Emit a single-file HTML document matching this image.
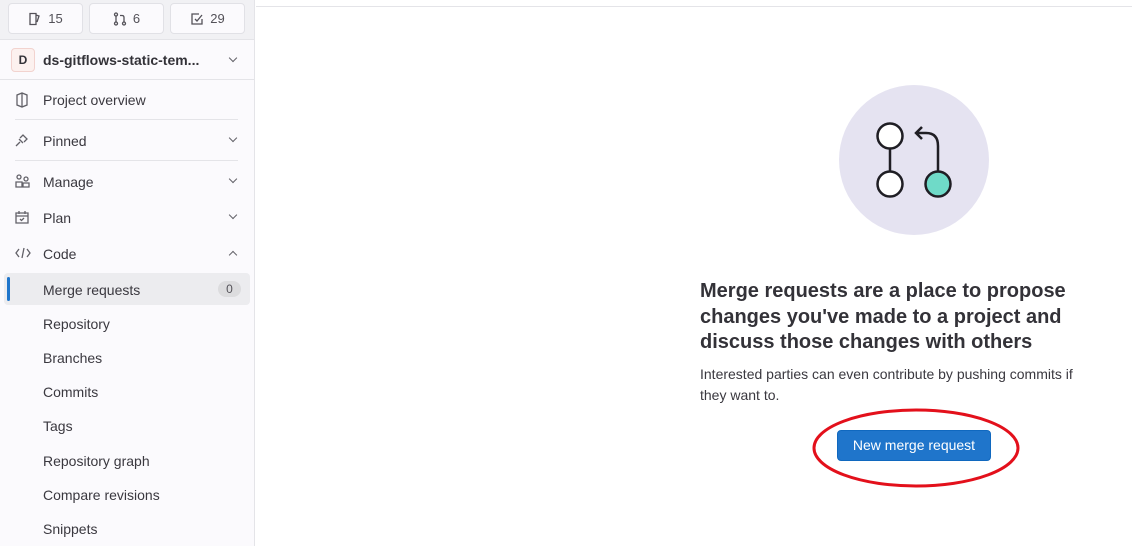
<!DOCTYPE html>
<html><head><style>
*{margin:0;padding:0;box-sizing:border-box}
body{width:1132px;height:546px;overflow:hidden;font-family:"Liberation Sans",sans-serif;background:#fff;color:#333238;position:relative}
.sb{position:absolute;left:0;top:0;width:255px;height:546px;background:#fbfafd;border-right:1px solid #e4e4e8}
.top{height:40px;background:#f1f1f4;border-bottom:1px solid #e4e4e8;position:relative}
.cnt{position:absolute;top:3px;height:31px;background:#fbfafd;border:1px solid #e1e1e6;border-radius:4px;font-size:13px;color:#535158;display:flex;align-items:center;justify-content:center;gap:6px}
.av{position:absolute;left:11px;top:48px;width:24px;height:24px;border:1px solid #f2d3cf;background:#fcf1ef;border-radius:4px;font-size:12px;font-weight:bold;text-align:center;line-height:22px}
.it{position:absolute;left:43px;font-size:14px;color:#3a383f}
.ic{position:absolute;left:15px}
.chev{position:absolute;left:230px;width:6px;height:6px;border-right:1.3px solid #626168;border-bottom:1.3px solid #626168;transform:rotate(45deg)}
.hr{position:absolute;left:15px;width:223px;height:1px;background:#e4e4e8}
</style></head><body>
<div class="sb">
<div class="top">
<div class="cnt" style="left:8px;width:75px"><svg width="14" height="14" viewBox="0 0 14 14" fill="none" stroke="#535158" stroke-width="1.3"><path d="M2 1.5h6v11H2zM8 3l3 1-2 6"/></svg>15</div>
<div class="cnt" style="left:89px;width:75px"><svg width="14" height="14" viewBox="0 0 14 14" fill="none" stroke="#535158" stroke-width="1.3"><circle cx="3" cy="2.5" r="1.5"/><circle cx="3" cy="11.5" r="1.5"/><circle cx="11" cy="11.5" r="1.5"/><path d="M3 4v6M11 10V5.5Q11 3.5 9 3.5H7"/></svg>6</div>
<div class="cnt" style="left:170px;width:75px"><svg width="14" height="14" viewBox="0 0 14 14" fill="none" stroke="#535158" stroke-width="1.3"><path d="M12 7v5H2V2h7M5 7l2 2 5-6"/></svg>29</div>
</div>
<div class="av">D</div>
<div class="it" style="top:52px;font-weight:bold;color:#333238">ds-gitflows-static-tem...</div>
<div class="chev" style="top:55px"></div>
<div style="position:absolute;left:0;top:79px;width:254px;height:1px;background:#e4e4e8"></div>
<svg class="ic" style="top:92px" width="14" height="16" viewBox="0 0 14 16" fill="none" stroke="#626168" stroke-width="1.3"><path d="M2 3l5-2 5 2v10l-5 2-5-2zM7 1v14"/></svg>
<div class="it" style="top:92px">Project overview</div>
<div class="hr" style="top:119px"></div>
<svg class="ic" style="top:133px" width="14" height="14" viewBox="0 0 14 14" fill="none" stroke="#626168" stroke-width="1.3"><path d="M1 13l4-4M4 6l4 4M5 5l3-3 4 4-3 3"/></svg>
<div class="it" style="top:133px">Pinned</div><div class="chev" style="top:135px"></div>
<div class="hr" style="top:160px"></div>
<svg class="ic" style="top:174px" width="16" height="14" viewBox="0 0 16 14" fill="none" stroke="#626168" stroke-width="1.3"><circle cx="4" cy="3" r="2"/><circle cx="11" cy="5" r="2"/><path d="M1 13V8h6v5zM8 13V9h6v4z"/></svg>
<div class="it" style="top:174px">Manage</div><div class="chev" style="top:176px"></div>
<svg class="ic" style="top:210px" width="14" height="14" viewBox="0 0 14 14" fill="none" stroke="#626168" stroke-width="1.3"><path d="M1 3h12v10H1zM1 6h12M4 1v3M10 1v3M5 9l1.5 1.5L9 8"/></svg>
<div class="it" style="top:210px">Plan</div><div class="chev" style="top:212px"></div>
<svg class="ic" style="top:247px" width="16" height="12" viewBox="0 0 16 12" fill="none" stroke="#626168" stroke-width="1.3"><path d="M4 2L1 6l3 4M12 2l3 4-3 4M9 1L7 11"/></svg>
<div class="it" style="top:246px">Code</div><div class="chev" style="top:252px;transform:rotate(225deg)"></div>
<div style="position:absolute;left:4px;top:273px;width:246px;height:32px;background:#ececef;border-radius:4px"></div>
<div style="position:absolute;left:7px;top:277px;width:3px;height:24px;background:#1f75cb;border-radius:2px"></div>
<div class="it" style="top:282px">Merge requests</div>
<div style="position:absolute;left:218px;top:281px;width:23px;height:16px;border-radius:8px;background:#dcdcde;font-size:12px;text-align:center;line-height:16px;color:#535158">0</div>
<div class="it" style="top:316px">Repository</div>
<div class="it" style="top:350px">Branches</div>
<div class="it" style="top:384px">Commits</div>
<div class="it" style="top:418px">Tags</div>
<div class="it" style="top:453px">Repository graph</div>
<div class="it" style="top:487px">Compare revisions</div>
<div class="it" style="top:521px">Snippets</div>
</div>
<div style="position:absolute;left:256px;top:6px;width:876px;height:1px;background:#e4e4e8"></div>
<svg style="position:absolute;left:838px;top:84px" width="152" height="152" viewBox="0 0 152 152">
<circle cx="76" cy="76" r="75" fill="#e5e3f1"/>
<path d="M52 64v23M100 87V62q0-13-12-13h-10M84 43l-6 6 6 6" fill="none" stroke="#1f1e24" stroke-width="2.5"/>
<circle cx="52" cy="52" r="12.5" fill="#fff" stroke="#1f1e24" stroke-width="2.5"/>
<circle cx="52" cy="100" r="12.5" fill="#fff" stroke="#1f1e24" stroke-width="2.5"/>
<circle cx="100" cy="100" r="12.5" fill="#6fdac8" stroke="#1f1e24" stroke-width="2.5"/>
</svg>
<div style="position:absolute;left:700px;top:279px;width:400px;font-size:20px;font-weight:bold;line-height:25.5px;color:#333238">Merge requests are a place to propose changes you've made to a project and discuss those changes with others</div>
<div style="position:absolute;left:700px;top:364px;width:402px;font-size:14px;line-height:21px;color:#3a383f">Interested parties can even contribute by pushing commits if they want to.</div>
<div style="position:absolute;left:837px;top:430px;width:154px;height:31px;background:#1f75cb;border:1px solid #1068bf;border-radius:4px;color:#fff;font-size:14px;text-align:center;line-height:29px">New merge request</div>
<svg style="position:absolute;left:810px;top:405px" width="212" height="86"><ellipse cx="106" cy="43" rx="102" ry="38" fill="none" stroke="#e3101b" stroke-width="3"/></svg>
</body></html>
